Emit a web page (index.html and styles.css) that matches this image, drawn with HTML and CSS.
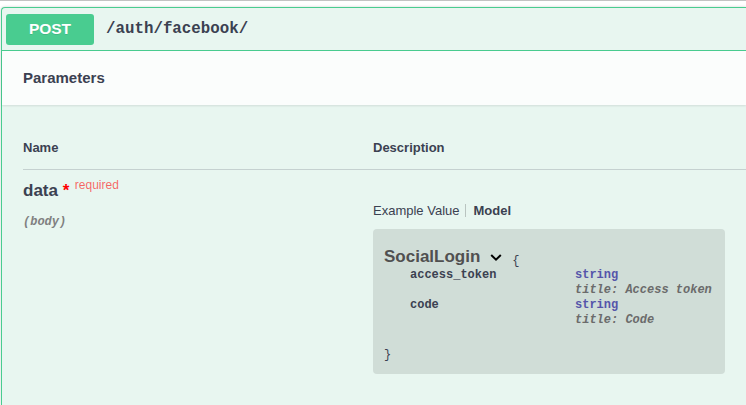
FILE: index.html
```html
<!DOCTYPE html>
<html lang="en">
<head>
<meta charset="utf-8">
<title>POST /auth/facebook/</title>
<link rel="stylesheet" href="styles.css">
</head>
<body>
<div class="topline"></div>
<div class="opblock">
  <div class="summary">
    <span class="method">POST</span>
    <span class="path">/auth/facebook/</span>
  </div>
  <div class="section-header"><h4>Parameters</h4></div>
  <div class="params">
    <div class="thead">
      <div>Name</div>
      <div>Description</div>
    </div>
    <div class="row">
      <div class="col-name">
        <div class="pname">data<span class="star">&nbsp;*</span><span class="req">required</span></div>
        <div class="pin">(body)</div>
      </div>
      <div class="col-desc">
        <div class="tabs"><span>Example Value</span><span class="sep"></span><span class="active">Model</span></div>
        <div class="model-box">
          <div class="model-title"><span class="mt">SocialLogin</span><svg class="caret" width="12" height="7" viewBox="0 0 12 7"><path d="M1.2 1 L6 5.6 L10.8 1" fill="none" stroke="#000" stroke-width="2"/></svg><span class="brace">{</span></div>
          <div class="props">
            <span class="key">access_token</span><span class="type">string</span>
            <span></span><span class="fmt">title: Access token</span>
            <span class="key">code</span><span class="type">string</span>
            <span></span><span class="fmt">title: Code</span>
          </div>
          <div class="close">}</div>
        </div>
      </div>
    </div>
  </div>
</div>
</body>
</html>
```

FILE: styles.css
```css
html, body {
  margin: 0;
  padding: 0;
}
body {
  background: #fff;
  height: 405px;
  overflow: hidden;
  font-family: "Liberation Sans", Arial, sans-serif;
  color: #3b4151;
}
.topline {
  height: 1px;
  background: #c3c3c3;
  margin-bottom: 6px;
}
.opblock {
  margin-left: 1px;
  border: 1px solid #49cc90;
  border-right: 0;
  border-bottom: 0;
  border-radius: 4px 0 0 0;
  background: #e8f6f0;
  box-shadow: 0 0 3px rgba(0, 0, 0, 0.19);
  height: 398px;
}
.summary {
  height: 42px;
  padding: 0 4px;
  display: flex;
  align-items: center;
  border-bottom: 1px solid #49cc90;
}
.method {
  width: 88px;
  height: 31px;
  border-radius: 3px;
  background: #49cc90;
  color: #fff;
  font-weight: bold;
  font-size: 15.5px;
  display: flex;
  align-items: center;
  justify-content: center;
  text-shadow: 0 1px 0 rgba(0, 0, 0, 0.1);
}
.path {
  margin-left: 12px;
  font-family: "Liberation Mono", "DejaVu Sans Mono", monospace;
  font-weight: bold;
  font-size: 15.8px;
  color: #3b4151;
}
.section-header {
  position: relative;
  height: 54px;
  padding: 0 21px;
  display: flex;
  align-items: center;
  background: rgba(255, 255, 255, 0.8);
  box-shadow: 0 1px 2px rgba(0, 0, 0, 0.1);
}
.section-header h4 {
  margin: 0 0 1px;
  font-size: 15px;
  font-weight: bold;
}
.params {
  padding-left: 21px;
}
.thead {
  display: grid;
  grid-template-columns: 350px 1fr;
  font-size: 13px;
  font-weight: bold;
  line-height: 15px;
  padding: 35px 0 14px;
  border-bottom: 1px solid rgba(59, 65, 81, 0.2);
}
.row {
  display: grid;
  grid-template-columns: 350px 1fr;
  padding-top: 11px;
}
.pname {
  font-size: 17px;
  font-weight: bold;
  line-height: 20px;
}
.star {
  color: #f00;
}
.req {
  position: relative;
  top: -7px;
  padding-left: 5.5px;
  font-size: 12px;
  font-weight: normal;
  color: rgba(255, 0, 0, 0.6);
}
.pin {
  margin-top: 13px;
  font-family: "Liberation Mono", "DejaVu Sans Mono", monospace;
  font-size: 12px;
  font-style: italic;
  font-weight: bold;
  line-height: 15px;
  color: #808080;
}
.tabs {
  margin-top: 22px;
  display: flex;
  align-items: center;
  font-size: 13px;
  line-height: 15px;
}
.sep {
  width: 1px;
  height: 13px;
  background: rgba(0, 0, 0, 0.2);
  margin: 0 7px 0 6px;
}
.active {
  font-weight: bold;
}
.model-box {
  margin-top: 11px;
  width: 352px;
  box-sizing: border-box;
  padding: 17px 13px 11px 11px;
  background: rgba(0, 0, 0, 0.1);
  border-radius: 4px;
}
.model-title {
  height: 22px;
  line-height: 22px;
  white-space: nowrap;
}
.mt {
  font-size: 17px;
  font-weight: bold;
  color: #505050;
}
.caret {
  margin-left: 10px;
  vertical-align: 1.5px;
}
.brace {
  margin-left: 10px;
  font-family: "Liberation Mono", "DejaVu Sans Mono", monospace;
  font-size: 12px;
  vertical-align: -2px;
  color: #3b4151;
}
.props {
  display: grid;
  grid-template-columns: 165px auto;
  padding-left: 26px;
  font-family: "Liberation Mono", "DejaVu Sans Mono", monospace;
  font-size: 12px;
  font-weight: bold;
  line-height: 15px;
  color: #3b4151;
}
.type {
  color: #55a;
}
.fmt {
  color: #6b6b6b;
  font-style: italic;
}
.close {
  margin-top: 20px;
  font-family: "Liberation Mono", "DejaVu Sans Mono", monospace;
  font-size: 12px;
  line-height: 15px;
}
```
